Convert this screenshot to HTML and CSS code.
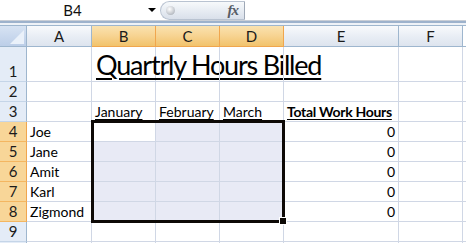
FILE: index.html
```html
<!DOCTYPE html>
<html lang="en">
<head>
  <meta charset="UTF-8" />
  <title>Quartrly Hours Billed</title>
  <link rel="stylesheet" href="styles.css">
</head>
<body>
  <div class="formula-bar">
    <div class="name-box">
      <span class="name-ref">B4</span>
      <span class="name-arrow"></span>
    </div>
    <div class="fx-pill">
      <span class="fx-knob"></span>
      <span class="fx-label">fx</span>
    </div>
    <div class="formula-input"></div>
  </div>
  <div class="bar-gap"></div>

  <div class="sheet">
    <div class="corner"><span class="corner-tri"></span></div>
    <div class="hd">A</div>
    <div class="hd sel">B</div>
    <div class="hd sel">C</div>
    <div class="hd sel">D</div>
    <div class="hd">E</div>
    <div class="hd">F</div>
    <div class="hd-rest"></div>

    <div class="rh">1</div>
    <div class="cell"></div>
    <div class="cell title-cell"><span class="title">Quartrly Hours Billed</span></div>
    <div class="cell"></div>
    <div class="cell"></div>
    <div class="cell"></div>
    <div class="cell"></div>
    <div class="cell rest"></div>

    <div class="rh">2</div>
    <div class="cell"></div>
    <div class="cell"></div>
    <div class="cell"></div>
    <div class="cell"></div>
    <div class="cell"></div>
    <div class="cell"></div>
    <div class="cell rest"></div>

    <div class="rh">3</div>
    <div class="cell"></div>
    <div class="cell"><span class="ul">January</span></div>
    <div class="cell"><span class="ul">February</span></div>
    <div class="cell"><span class="ul">March</span></div>
    <div class="cell"><span class="ul bold">Total Work Hours</span></div>
    <div class="cell"></div>
    <div class="cell rest"></div>
  </div>

  <script>
    const names = ['Joe', 'Jane', 'Amit', 'Karl', 'Zigmond'];
    const sheet = document.querySelector('.sheet');

    names.forEach((name, i) => {
      const row = i + 4;
      let html = `<div class="rh sel">${row}</div><div class="cell">${name}</div>`;
      for (let c = 0; c < 3; c++) {
        const active = row === 4 && c === 0;
        html += `<div class="cell ${active ? '' : 'range'}"></div>`;
      }
      html += `<div class="cell num">0</div><div class="cell"></div><div class="cell rest"></div>`;
      sheet.insertAdjacentHTML('beforeend', html);
    });

    // row 9, plus the top edge of the next row
    ['9', ''].forEach(label => {
      let html = `<div class="rh">${label}</div>`;
      for (let c = 0; c < 6; c++) html += '<div class="cell"></div>';
      html += '<div class="cell rest"></div>';
      sheet.insertAdjacentHTML('beforeend', html);
    });

    sheet.insertAdjacentHTML('beforeend', '<div class="selection"></div><div class="fill-handle"></div>');
  </script>
</body>
</html>
```

FILE: styles.css
```css
body {
  margin: 0;
  width: 466px;
  height: 243px;
  overflow: hidden;
  background: #fff;
  font-family: Lato, "Liberation Sans", sans-serif;
  font-size: 14px;
  color: #000;
}

/* formula bar */
.formula-bar {
  display: flex;
  height: 20px;
  border-bottom: 1px solid #c9ced6;
  background: #fff;
}

.name-box {
  width: 160px;
  display: flex;
  align-items: center;
}

.name-ref {
  width: 145px;
  text-align: center;
  font-size: 15px;
  color: #111;
}

.name-arrow {
  width: 0;
  height: 0;
  border-left: 4px solid transparent;
  border-right: 4px solid transparent;
  border-top: 4px solid #000;
  margin-left: 3px;
}

.fx-pill {
  width: 85px;
  margin-top: 1px;
  height: 19px;
  box-sizing: border-box;
  border: 1px solid #b9c3d1;
  border-right: 1px solid #9ea8b6;
  border-radius: 10px 0 0 10px;
  background: linear-gradient(#f7f9fb, #e6ebf2 55%, #d9e0ea);
  display: flex;
  align-items: center;
  justify-content: space-between;
  padding: 0 6px 0 5px;
}

.fx-knob {
  width: 9px;
  height: 9px;
  border-radius: 50%;
  background: radial-gradient(circle at 40% 35%, #fff, #c4c8ce 60%, #959ba4);
}

.fx-label {
  font-family: "Liberation Serif", serif;
  font-style: italic;
  font-weight: bold;
  font-size: 15px;
  color: #585d66;
  letter-spacing: -1px;
}

.formula-input {
  flex: 1;
}

.bar-gap {
  height: 2px;
  border-top: 2px solid #9db2cc;
  background: #eef2f7;
}

/* grid */
.sheet {
  position: relative;
  display: grid;
  grid-template-columns: 27px 65px 64px 64px 64px 115px 64px 1fr;
  grid-template-rows: 21px 35px repeat(9, 20px);
  border-top: 1px solid #9eb6ce;
}

.corner {
  position: relative;
  box-sizing: border-box;
  border-right: 1px solid #9eb6ce;
  border-bottom: 1px solid #9eb6ce;
  background: linear-gradient(#d7e3f3, #bccee8);
}

.corner-tri {
  position: absolute;
  right: 2px;
  bottom: 2px;
  width: 0;
  height: 0;
  border-left: 14px solid transparent;
  border-bottom: 14px solid #eaf1fa;
}

.hd {
  box-sizing: border-box;
  border-right: 1px solid #9eb6ce;
  border-bottom: 1px solid #9eb6ce;
  background: linear-gradient(#f8fafc, #e9eef5 50%, #dde4ee);
  display: flex;
  align-items: center;
  justify-content: center;
  color: #1b1b1b;
  font-size: 15px;
}

.hd.sel {
  border-right-color: #f0a64e;
  border-bottom-color: #f0a64e;
  background: linear-gradient(#fae2b0, #f7d391 50%, #f2c36c);
}

.hd-rest {
  border-bottom: 1px solid #9eb6ce;
  background: #fff;
}

.rh {
  box-sizing: border-box;
  border-right: 1px solid #9eb6ce;
  border-bottom: 1px solid #c5d5e8;
  background: #e4ecf7;
  display: flex;
  align-items: flex-end;
  justify-content: center;
  line-height: 19px;
  font-size: 15px;
  color: #1b1b1b;
}

.rh.sel {
  background: #f8d698;
  border-right-color: #f0a64e;
  border-bottom-color: #f4b661;
}

.cell {
  box-sizing: border-box;
  border-right: 1px solid #d0d7e5;
  border-bottom: 1px solid #d0d7e5;
  display: flex;
  align-items: flex-end;
  padding: 0 2px 0 3px;
  line-height: 19px;
  white-space: nowrap;
}

.cell.rest {
  border-right: none;
}

.cell.range {
  background: #e8eaf5;
}

.cell.num {
  justify-content: flex-end;
  padding-right: 3px;
}

.title-cell {
  padding-left: 4px;
}

.title {
  font-size: 27px;
  line-height: 32px;
  letter-spacing: -1.2px;
  text-decoration: underline;
  text-decoration-thickness: 2px;
  text-underline-offset: 3px;
}

.ul {
  text-decoration: underline;
  text-underline-offset: 2px;
}

.bold {
  font-weight: bold;
  letter-spacing: -0.3px;
}

/* selection overlay */
.selection {
  position: absolute;
  left: 91px;
  top: 94px;
  width: 194px;
  height: 103px;
  box-sizing: border-box;
  border: 3px solid #0d0906;
  pointer-events: none;
}

.fill-handle {
  position: absolute;
  left: 279px;
  top: 191px;
  width: 6px;
  height: 6px;
  background: #0d0906;
  border: 1px solid #fff;
}
```
